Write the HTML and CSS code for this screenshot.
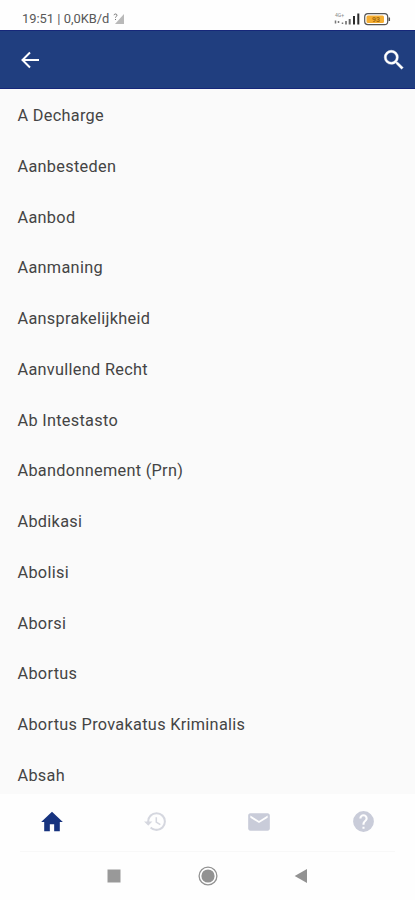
FILE: index.html
```html
<!DOCTYPE html>
<html lang="id">
<head>
<meta charset="utf-8">
<meta name="viewport" content="width=device-width">
<title>Kamus Hukum</title>
<link rel="stylesheet" href="styles.css">
</head>
<body>
<div class="status">
  <span class="clock">19:51 | 0,0KB/d</span>
  <svg class="nosim" width="12" height="12" viewBox="0 0 12 12"><path d="M11 1v10H2z" fill="#b9b9b9"/><path d="M1 2.200c0-1.600 3-1.600 3 0C4 3.400 2.500 3.400 2.500 4.700M2.500 6v1" fill="none" stroke="#777" stroke-width="1"/></svg>
  <svg class="signal" width="27" height="14" viewBox="0 0 27 14"><text x="1" y="5" class="net">4G+</text><path d="M1.500 8.500v3M4.500 9v2M8.500 10.500v1.500" stroke="#777" stroke-width="1.500"/><path d="M12 9v3.500" stroke="#888" stroke-width="2"/><path d="M15.700 7v5.500" stroke="#666" stroke-width="2"/><path d="M20 4v8.500M24.300 1.500v11" stroke="#2b2b2b" stroke-width="2"/></svg>
  <svg class="battery" width="27" height="13" viewBox="0 0 27 13"><rect x=".7" y=".7" width="23" height="11" rx="3.200" fill="#fff" stroke="#555" stroke-width="1.200"/><path d="M25.300 4.500v3.500" stroke="#555" stroke-width="1.500"/><rect x="2.500" y="2.500" width="17.500" height="7.500" rx="1.500" fill="#f5ae32"/><text x="12" y="8.800" text-anchor="middle" class="charge">93</text></svg>
</div>
<header class="bar">
  <svg width="24" height="24" viewBox="0 0 24 24"><path d="M21 12H5M12 4.500L4.500 12l7.500 7.500" fill="none" stroke="#fff" stroke-width="2"/></svg>
  <svg width="26" height="26" viewBox="0 0 24 24"><path fill="#fff" stroke="#fff" stroke-width=".4" d="M15.500 14h-.79l-.28-.27A6.470 6.470 0 0 0 16 9.500 6.500 6.500 0 1 0 9.500 16c1.610 0 3.090-.59 4.230-1.570l.27.28v.79l5 4.990L20.490 19l-4.990-5zm-6 0C7.010 14 5 11.990 5 9.500S7.010 5 9.500 5 14 7.010 14 9.500 11.990 14 9.500 14z"/></svg>
</header>
<ul class="list">
  <li>A Decharge</li>
  <li>Aanbesteden</li>
  <li>Aanbod</li>
  <li>Aanmaning</li>
  <li>Aansprakelijkheid</li>
  <li>Aanvullend Recht</li>
  <li>Ab Intestasto</li>
  <li>Abandonnement (Prn)</li>
  <li>Abdikasi</li>
  <li>Abolisi</li>
  <li>Aborsi</li>
  <li>Abortus</li>
  <li>Abortus Provakatus Kriminalis</li>
  <li>Absah</li>
</ul>
<nav class="tabs">
  <svg class="active" width="26" height="26" viewBox="0 0 24 24"><path d="M10 20.500V14h4v6.500h5.200V12H22L12 2.500 2 12h2.800v8.500z"/></svg>
  <svg class="history" width="25" height="25" viewBox="0 0 24 24"><path d="M13 3a9 9 0 0 0-9 9H1l3.890 3.890.07.14L9 12H6c0-3.870 3.130-7 7-7s7 3.130 7 7-3.130 7-7 7c-1.930 0-3.680-.79-4.940-2.060l-1.420 1.420A8.954 8.954 0 0 0 13 21a9 9 0 0 0 0-18zm-1 5v5l4.280 2.540.72-1.210-3.500-2.080V8H12z"/></svg>
  <svg width="26" height="26" viewBox="0 0 24 24"><path d="M20 4H4c-1.100 0-1.990.9-1.990 2L2 18c0 1.100.9 2 2 2h16c1.100 0 2-.9 2-2V6c0-1.100-.9-2-2-2zm0 4l-8 5-8-5V6l8 5 8-5v2z"/></svg>
  <svg width="25" height="25" viewBox="0 0 24 24"><path d="M12 2a10 10 0 1 0 0 20 10 10 0 0 0 0-20zm1 17h-2v-2h2v2zm2.070-7.750l-.9.920C13.450 12.900 13 13.500 13 15h-2v-.5c0-1.100.45-2.100 1.170-2.830l1.240-1.260c.37-.36.590-.86.590-1.410a2 2 0 1 0-4 0H8a4 4 0 1 1 8 0c0 .88-.36 1.680-.93 2.250z"/></svg>
</nav>
<div class="system">
  <svg width="14" height="14" viewBox="0 0 14 14"><rect x=".5" y=".5" width="13" height="13" fill="#999"/></svg>
  <svg width="20" height="20" viewBox="0 0 20 20"><circle cx="10" cy="10" r="8.900" fill="#fff" stroke="#929292" stroke-width="1.300"/><circle cx="10" cy="10" r="6.600" fill="#929292"/></svg>
  <svg width="14" height="16" viewBox="0 0 14 16"><path d="M.7 8L13 1v14z" fill="#929292"/></svg>
</div>
</body>
</html>
```
FILE: styles.css
```css
* { box-sizing: border-box; }
body {
  margin: 0;
  height: 900px;
  display: flex;
  flex-direction: column;
  overflow: hidden;
  background: #fefefe;
  font-family: Roboto, sans-serif;
}
svg { display: block; flex: none; }
.status {
  height: 30px;
  flex: none;
  display: flex;
  align-items: center;
  padding: 8px 24px 0 22px;
}
.clock { font-size: 12.900px; line-height: 14px; color: #585858; white-space: pre; }
.nosim { margin-left: 4px; }
.signal { margin-left: auto; margin-right: 3px; }
.net { font-size: 5px; fill: #888; }
.charge { font-size: 7px; font-weight: 700; fill: #a36a0d; }
.bar {
  height: 59px;
  flex: none;
  display: flex;
  align-items: center;
  justify-content: space-between;
  padding: 0 8px 0 18px;
  background: #203e7f;
  border-top: 1px solid #16277a;
  border-bottom: 1px solid #16277a;
}
.list {
  flex: none;
  height: 705px;
  margin: 0;
  padding: 2px 17.500px 0;
  overflow: hidden;
  list-style: none;
  background: #fafafa;
}
.list li {
  height: 50.770px;
  line-height: 50.770px;
  font-size: 16.300px;
  letter-spacing: 0.300px;
  color: #444;
}
.tabs {
  flex: none;
  height: 57px;
  padding-bottom: 2px;
  display: grid;
  grid-template-columns: repeat(4, 1fr);
  align-items: center;
  justify-items: center;
  fill: #c9ccd9;
}
.tabs .active { fill: #17337f; }
.tabs .history { fill: #d5d7df; }
.system {
  flex: 1;
  margin: 0 20px;
  border-top: 1px solid #f8f8f8;
  display: flex;
  align-items: center;
  justify-content: space-between;
  padding: 0 87px 0 87px;
}
```
